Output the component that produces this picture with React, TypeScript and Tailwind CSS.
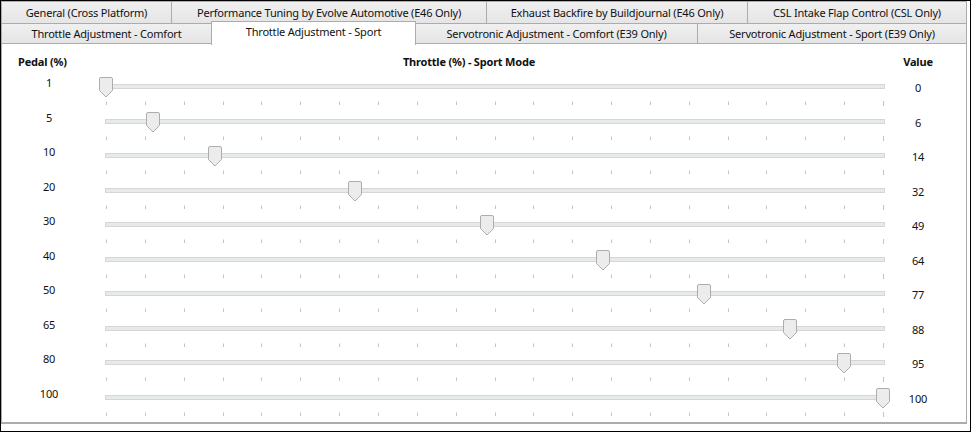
import React from "react";

const FONT = { fontFamily: '"Noto Sans", "Open Sans", Arial, sans-serif' };

const topTabs = [
  { label: "General (Cross Platform)", w: "w-[171px]" },
  { label: "Performance Tuning by Evolve Automotive (E46 Only)", w: "w-[316px]" },
  { label: "Exhaust Backfire by Buildjournal (E46 Only)", w: "w-[262px]" },
  { label: "CSL Intake Flap Control (CSL Only)", w: "w-[220px]" },
];

const bottomTabs = [
  { label: "Throttle Adjustment - Comfort", w: "w-[211px]", active: false },
  { label: "Throttle Adjustment - Sport", w: "w-[205px]", active: true },
  { label: "Servotronic Adjustment - Comfort (E39 Only)", w: "w-[283px]", active: false },
  { label: "Servotronic Adjustment - Sport (E39 Only)", w: "w-[270px]", active: false },
];

const rows = [
  { pedal: 1, value: 0 },
  { pedal: 5, value: 6 },
  { pedal: 10, value: 14 },
  { pedal: 20, value: 32 },
  { pedal: 30, value: 49 },
  { pedal: 40, value: 64 },
  { pedal: 50, value: 77 },
  { pedal: 65, value: 88 },
  { pedal: 80, value: 95 },
  { pedal: 100, value: 100 },
];

const ticks = Array.from({ length: 21 }, (_, k) => Math.round(10 + k * 38.85) + 0.5);

function Thumb({ value }: { value: number }) {
  const center = Math.round(10 + value * 7.77);
  return (
    <svg
      className="absolute top-[1px]"
      style={{ left: center - 7 }}
      width="14"
      height="21"
      viewBox="0 0 14 21"
    >
      <path
        d="M0.5 2 Q0.5 0.5 2 0.5 H12 Q13.5 0.5 13.5 2 V13.5 L7 20 L0.5 13.5 Z"
        fill="#ececec"
        stroke="#adadad"
      />
    </svg>
  );
}

function SliderRow({ pedal, value }: { pedal: number; value: number }) {
  return (
    <div className="flex h-[34.5px]">
      <div className="w-[94px] text-center leading-[16px] -mt-px">{pedal}</div>
      <div className="relative w-[798px]">
        <div className="ml-[9px] mt-[8px] h-[5px] w-[780px] bg-[#e7eaea] border border-[#d6d6d6]" />
        <svg className="absolute left-0 top-[25px]" width="798" height="5">
          {ticks.map((x, i) => (
            <line
              key={i}
              x1={x}
              x2={x}
              y1={i === 20 ? 0 : 0.5}
              y2={i === 20 ? 5 : 4}
              stroke="#c4c4c4"
              strokeWidth="1"
            />
          ))}
        </svg>
        <Thumb value={value} />
      </div>
      <div className="w-[48px] text-center leading-[16px] mt-[4px]">{value}</div>
    </div>
  );
}

export default function App() {
  return (
    <div
      className="w-[971px] h-[432px] border border-black bg-white text-[11px] tracking-[-0.2px] text-[#111]"
      style={FONT}
    >
      <div className="w-[966px] h-[423px] flex flex-col">
        <div className="flex h-[23px]">
          {topTabs.map((t, i) => (
            <div
              key={t.label}
              className={`${t.w} ${i > 0 ? "-ml-px" : ""} h-[23px] border border-[#acacac] bg-gradient-to-b from-[#f0f0f0] to-[#e5e5e5] flex items-center justify-center leading-[16px]`}
            >
              {t.label}
            </div>
          ))}
        </div>
        <div className="flex h-[21px] -mt-px relative z-10">
          {bottomTabs.map((t, i) =>
            t.active ? (
              <div
                key={t.label}
                className={`${t.w} -ml-px h-[24px] -mt-[2px] border border-b-0 border-[#acacac] bg-white flex items-center justify-center leading-[16px] pb-[3px] relative z-10`}
              >
                {t.label}
              </div>
            ) : (
              <div
                key={t.label}
                className={`${t.w} ${i > 0 ? "-ml-px" : ""} h-[21px] border border-[#acacac] bg-gradient-to-b from-[#f0f0f0] to-[#e5e5e5] flex items-center justify-center leading-[16px] pt-px`}
              >
                {t.label}
              </div>
            )
          )}
        </div>
        <div className="-mt-px h-[381px] border border-b-2 border-[#acacac] bg-white">
          <div className="flex h-[32px] pt-[10px] leading-[16px] font-bold">
            <div className="w-[94px] pl-[16px]">Pedal (%)</div>
            <div className="w-[798px] pr-[52px] text-center">Throttle (%) - Sport Mode</div>
            <div className="w-[48px] text-center">Value</div>
          </div>
          {rows.map((r) => (
            <SliderRow key={r.pedal} pedal={r.pedal} value={r.value} />
          ))}
        </div>
      </div>
    </div>
  );
}
